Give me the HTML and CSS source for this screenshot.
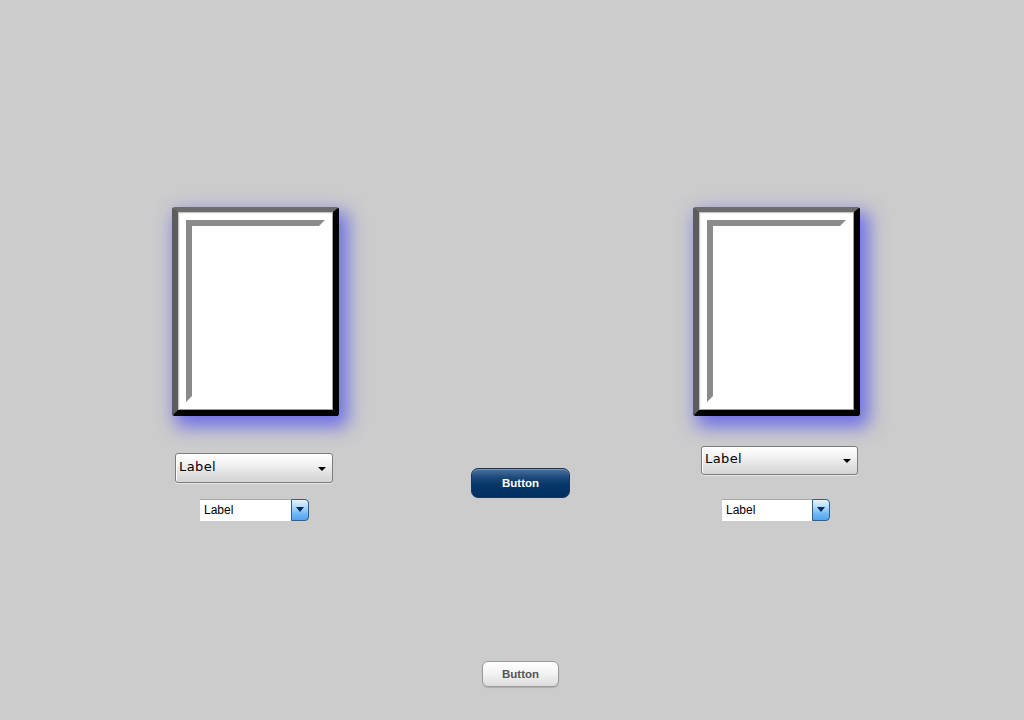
FILE: index.html
```html
<!DOCTYPE html>
<html>
<head>
<meta charset="utf-8">
<link rel="stylesheet" href="styles.css">
</head>
<body>
<div class="stage">
  <div class="row">
    <div class="col col-left">
      <div class="frame"><div class="groove"></div></div>
      <div class="select select-left"><span class="select-text">Label</span><span class="select-arrow"></span></div>
      <div class="combo combo-left"><div class="combo-field">Label</div><div class="combo-btn"><span class="combo-arrow"></span></div></div>
    </div>
    <div class="col col-center">
      <button class="btn-blue">Button</button>
    </div>
    <div class="col col-right">
      <div class="frame"><div class="groove"></div></div>
      <div class="select select-right"><span class="select-text">Label</span><span class="select-arrow"></span></div>
      <div class="combo combo-right"><div class="combo-field">Label</div><div class="combo-btn"><span class="combo-arrow"></span></div></div>
    </div>
  </div>
  <div class="bottom">
    <button class="btn-gray">Button</button>
  </div>
</div>
</body>
</html>
```

FILE: styles.css
```css
html, body {
  margin: 0;
  padding: 0;
  background: #cccccc;
  width: 1024px;
  height: 720px;
  overflow: hidden;
}

.stage {
  padding-top: 207px;
}

.row {
  display: flex;
  align-items: flex-start;
  padding-left: 172px;
}

.col {
  display: flex;
  flex-direction: column;
  align-items: flex-start;
}

.col-left { width: 167px; }
.col-center { width: 99px; margin-left: 132px; padding-top: 261px; }
.col-right { width: 167px; margin-left: 123px; }

.frame {
  box-sizing: border-box;
  width: 167px;
  height: 209px;
  border-style: solid;
  border-width: 5px 6px 6px 6px;
  border-color: #6c6c6c #030303 #030303 #5c5c5c;
  border-radius: 3px;
  background: #fff;
  box-shadow: 6px 8px 18px 3px rgba(95, 95, 235, 0.85), inset 1px 1px 0 #c4c4c4, inset -1px -1px 0 #a0a0a0, inset 2px 2px 0 #f4f4f4;
  padding: 8px 8px 8px 8px;
}

.groove {
  box-sizing: border-box;
  width: 100%;
  height: 100%;
  border-style: solid;
  border-width: 6px;
  border-color: #8c8c8c transparent transparent #8a8a8a;
}

.select {
  box-sizing: border-box;
  position: relative;
  height: 30px;
  border: 1px solid #7c7c7c;
  border-radius: 3px;
  background: linear-gradient(#ffffff 0%, #f3f3f3 35%, #dedede 75%, #d4d4d4 100%);
  box-shadow: inset 1px 1px 0 #fff, 0 1px 0 #e6e6e6;
  padding: 3px 0 0 3px;
}

.select-left { width: 158px; margin-top: 37px; margin-left: 3px; }
.select-right { width: 157px; height: 29px; margin-top: 30px; margin-left: 8px; padding-top: 2px; }

.select-text {
  font-family: "DejaVu Sans", sans-serif;
  font-size: 13px;
  letter-spacing: 0.4px;
  color: #000;
}

.select-arrow {
  position: absolute;
  right: 6px;
  top: 13px;
  width: 0;
  height: 0;
  border-left: 4px solid transparent;
  border-right: 4px solid transparent;
  border-top: 4px solid #000;
}

.select-right .select-arrow { top: 12px; }

.combo {
  display: flex;
  height: 22px;
}

.combo-left { width: 109px; margin-top: 16px; margin-left: 28px; }
.combo-right { width: 108px; margin-top: 24px; margin-left: 29px; }

.combo-field {
  flex: 1;
  background: #fff;
  border-top: 1px solid #a8a8a8;
  font-family: "Liberation Sans", Arial, sans-serif;
  font-size: 12px;
  line-height: 20px;
  padding-left: 4px;
  color: #000;
}

.combo-btn {
  box-sizing: border-box;
  width: 18px;
  height: 22px;
  border: 1px solid #2f5f8f;
  border-radius: 0 4px 4px 0;
  background: linear-gradient(#e6f4ff 0%, #a9d6fb 40%, #6db6f5 70%, #4ea6ef 100%);
  display: flex;
  align-items: center;
  justify-content: center;
}

.combo-arrow {
  width: 0;
  height: 0;
  margin-top: -2px;
  border-left: 4px solid transparent;
  border-right: 4px solid transparent;
  border-top: 5px solid #0a2a55;
}

.btn-blue {
  box-sizing: border-box;
  width: 99px;
  height: 30px;
  border: 1px solid #1a3556;
  border-radius: 7px;
  background: linear-gradient(#4c72a0 0%, #1d4a7c 30%, #053767 55%, #003061 100%);
  box-shadow: inset 0 1px 0 rgba(255,255,255,0.25);
  color: #fff;
  font-family: "Liberation Sans", Arial, sans-serif;
  font-weight: bold;
  font-size: 11.5px;
  padding: 0;
  margin: 0;
}

.bottom {
  padding-top: 140px;
  padding-left: 482px;
}

.btn-gray {
  box-sizing: border-box;
  width: 77px;
  height: 26px;
  border: 1px solid #9a9a9a;
  border-radius: 6px;
  background: linear-gradient(#ffffff 0%, #f4f4f4 45%, #dcdcdc 100%);
  box-shadow: 0 1px 1px rgba(0,0,0,0.15);
  color: #555;
  font-family: "Liberation Sans", Arial, sans-serif;
  font-weight: bold;
  font-size: 11.5px;
  padding: 0;
  margin: 0;
}
```
